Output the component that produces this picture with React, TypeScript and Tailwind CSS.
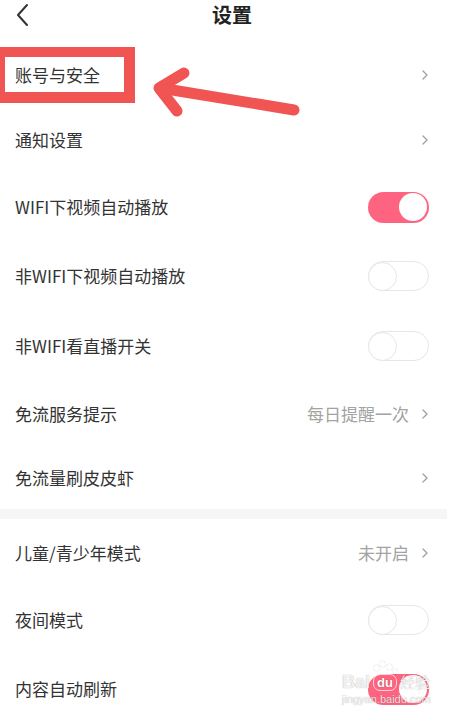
import React from "react";

const Chevron = () => (
  <svg width="8" height="12" viewBox="0 0 8 12" className="shrink-0">
    <path d="M2 2 L6 6 L2 10" fill="none" stroke="#a0a0a0" strokeWidth="1.3" strokeLinecap="round" strokeLinejoin="round" />
  </svg>
);

const Toggle = ({ on }: { on: boolean }) =>
  on ? (
    <div className="w-[61px] h-[31px] rounded-full bg-[#fe6480] flex items-center justify-end px-[2px] shrink-0">
      <div className="w-[28px] h-[28px] rounded-full bg-white" />
    </div>
  ) : (
    <div className="w-[61px] h-[30px] rounded-full border-[1.5px] border-[#e6e6ea] bg-white flex items-center justify-start shrink-0 box-border">
      <div className="w-[29px] h-[29px] rounded-full bg-white border-[1.5px] border-[#e6e6ea] -ml-[1.5px] box-border" />
    </div>
  );

type Row = { label: string; h: string; right?: string; kind: "chev" | "on" | "off" };

const Item = ({ row }: { row: Row }) => (
  <div className={`flex items-center justify-between pl-[15px] pr-[32px] ${row.h}`}>
    <span className="text-[17px] text-[#333]">{row.label}</span>
    {row.kind === "chev" ? (
      <div className="flex items-center gap-[12px]">
        {row.right && <span className="text-[17px] text-[#a3a3a3]">{row.right}</span>}
        <Chevron />
      </div>
    ) : (
      <Toggle on={row.kind === "on"} />
    )}
  </div>
);

const shadow = "[text-shadow:0_0_1px_rgba(0,0,0,0.4)]";

export default function App() {
  const group1: Row[] = [
    { label: "账号与安全", h: "h-[65px]", kind: "chev" },
    { label: "通知设置", h: "h-[66px]", kind: "chev" },
    { label: "WIFI下视频自动播放", h: "h-[68px]", kind: "on" },
    { label: "非WIFI下视频自动播放", h: "h-[70px]", kind: "off" },
    { label: "非WIFI看直播开关", h: "h-[70px]", kind: "off" },
    { label: "免流服务提示", h: "h-[66px]", kind: "chev", right: "每日提醒一次" },
    { label: "免流量刷皮皮虾", h: "h-[62px]", kind: "chev" },
  ];
  const group2: Row[] = [
    { label: "儿童/青少年模式", h: "h-[67px]", kind: "chev", right: "未开启" },
    { label: "夜间模式", h: "h-[68px]", kind: "off" },
    { label: "内容自动刷新", h: "h-[70px]", kind: "on" },
  ];
  return (
    <div
      className="relative w-[461px] h-[716px] overflow-hidden bg-white"
      style={{ fontFamily: '"Noto Sans CJK SC", "Noto Sans", sans-serif' }}
    >
      <div className="h-[42px] flex items-start relative">
        <div className="absolute left-[14px] top-[3px]">
          <svg width="18" height="24" viewBox="0 0 18 24">
            <path d="M13 2 L4 12 L13 22" fill="none" stroke="#333" strokeWidth="2" strokeLinecap="round" strokeLinejoin="round" />
          </svg>
        </div>
        <div className="w-full text-center text-[20px] font-bold text-[#222] leading-[30px] pl-[3px]">设置</div>
      </div>
      {group1.map((r) => (
        <Item key={r.label} row={r} />
      ))}
      <div className="h-[10px] bg-[#f6f6f6] mr-[14px]" />
      {group2.map((r) => (
        <Item key={r.label} row={r} />
      ))}

      {/* annotation: red box */}
      <div className="absolute left-0 top-[47px] w-[135px] h-[56px] border-[#f05553] border-t-[10px] border-b-[11px] border-l-[5px] border-r-[11px] box-border" />
      {/* annotation: arrow */}
      <svg className="absolute left-0 top-0" width="461" height="200" viewBox="0 0 461 200">
        <g stroke="#f05553" strokeWidth="11" strokeLinecap="round" strokeLinejoin="round" fill="none">
          <path d="M294 110 L160 88" />
          <path d="M184 73 L159 88 L177 111" />
        </g>
      </svg>

      {/* watermark */}
      <div className="absolute left-[342px] top-[661px] w-[95px] h-[48px] pointer-events-none">
        <div className="flex items-end h-[31px]">
          <span className={`text-[18px] leading-[20px] font-bold text-white/85 ${shadow}`} style={{ fontFamily: '"Liberation Sans", sans-serif' }}>Bai</span>
          <div className="relative w-[28px] h-[31px] mx-[1px]">
            <div className="absolute left-[9px] top-[0px] w-[5px] h-[6px] rounded-full bg-white/80 [box-shadow:0_0_1px_rgba(0,0,0,0.4)]" />
            <div className="absolute left-[3px] top-[4px] w-[5px] h-[6px] rounded-full bg-white/80 [box-shadow:0_0_1px_rgba(0,0,0,0.4)]" />
            <div className="absolute left-[16px] top-[3px] w-[5px] h-[6px] rounded-full bg-white/80 [box-shadow:0_0_1px_rgba(0,0,0,0.4)]" />
            <div className="absolute left-[22px] top-[8px] w-[4px] h-[5px] rounded-full bg-white/80 [box-shadow:0_0_1px_rgba(0,0,0,0.4)]" />
            <div className="absolute left-[2px] top-[13px] w-[24px] h-[17px] rounded-[7px] border border-white/70 flex items-center justify-center">
              <span className={`text-[13px] font-bold text-white leading-none ${shadow}`} style={{ fontFamily: '"Liberation Sans", sans-serif' }}>du</span>
            </div>
          </div>
          <span className={`text-[15px] leading-[20px] text-white/85 ${shadow}`}>经验</span>
        </div>
        <div className={`text-[11px] leading-[13px] text-white/85 ${shadow} mt-[1px]`} style={{ fontFamily: '"Liberation Sans", sans-serif' }}>jingyan.baidu.com</div>
      </div>
    </div>
  );
}
